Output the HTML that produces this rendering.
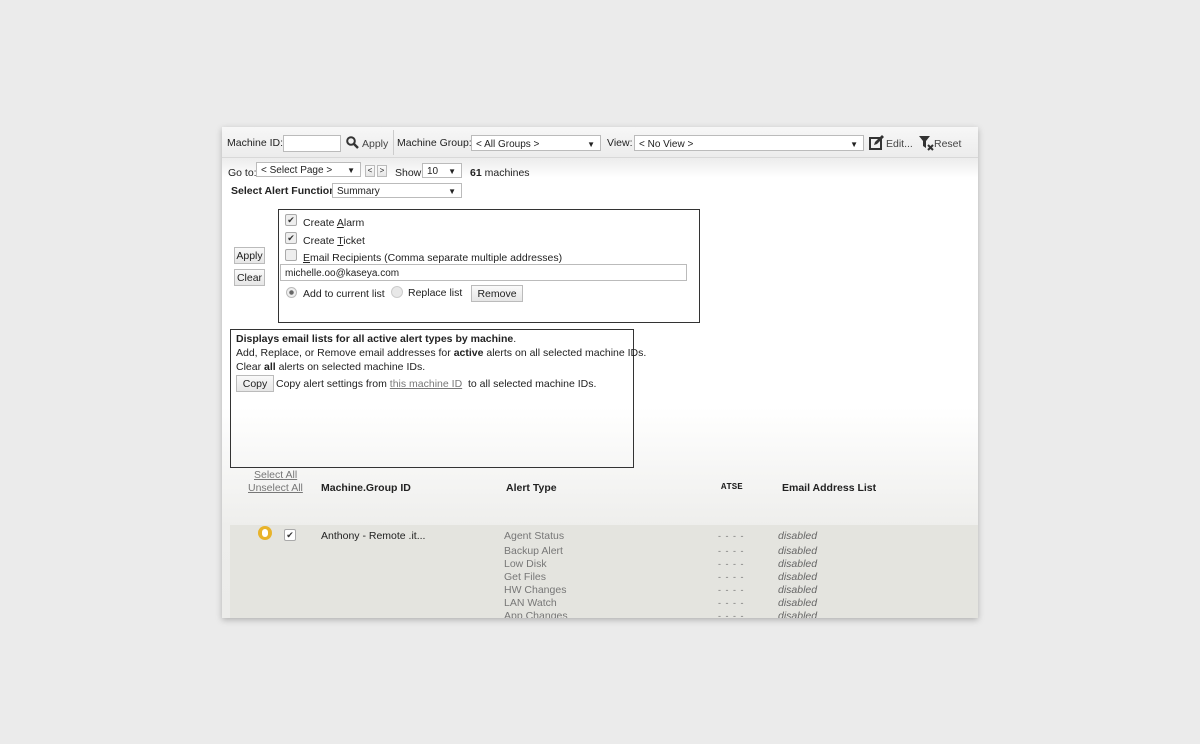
<!DOCTYPE html>
<html><head><style>
body{margin:0;width:1200px;height:744px;background:#ebebeb;font-family:"Liberation Sans",sans-serif;font-size:10.5px;color:#222;position:relative;overflow:hidden}
.a{position:absolute;white-space:nowrap}
#p{position:absolute;left:222px;top:127px;width:756px;height:491px;background:linear-gradient(#fff 0,#fff 280px,#eeeeec 400px,#ececea 491px);box-shadow:0 2px 6px rgba(0,0,0,.25);overflow:hidden}
.sel{position:absolute;background:#fff;border:1px solid #bbb;height:14px;font-size:10px;line-height:15px;padding-left:4px;box-sizing:border-box}
.sel i{position:absolute;right:5px;top:0;font-style:normal;font-size:8px}
.btn{position:absolute;border:1px solid #bbb;background:linear-gradient(#fafafa,#e6e6e6);font-size:10.5px;line-height:16px;text-align:center;box-sizing:border-box;height:17px}
.cb{position:absolute;width:10px;height:10px;border:1px solid #aaa;border-radius:2px;background:#eee;font-size:9px;line-height:10px;text-align:center;color:#333}
.g{color:#777}
.it{color:#666;font-style:italic}
</style></head><body>
<div id="p">
<div class="a" style="left:0;top:0;width:756px;height:30px;background:linear-gradient(#f7f7f7,#ececec);border-bottom:1px solid #d8d8d8"></div>
<div class="a" style="left:0;top:31px;width:756px;height:20px;background:linear-gradient(#ececec,#fff)"></div>
<div class="a" style="left:5px;top:10px">Machine ID:</div>
<div class="sel" style="left:61px;top:8px;width:58px;height:17px"></div>
<svg class="a" style="left:124px;top:9px" width="13" height="13"><circle cx="5" cy="5" r="3.8" fill="none" stroke="#333" stroke-width="2"/><path d="M8 8l4 4" stroke="#333" stroke-width="2.4"/></svg>
<div class="a" style="left:140px;top:11px;color:#444">Apply</div>
<div class="a" style="left:171px;top:3px;width:1px;height:25px;background:#ccc"></div>
<div class="a" style="left:175px;top:10px">Machine Group:</div>
<div class="sel" style="left:249px;top:8px;width:130px;height:16px;line-height:17px">&lt; All Groups &gt;<i>▼</i></div>
<div class="a" style="left:385px;top:10px">View:</div>
<div class="sel" style="left:412px;top:8px;width:230px;height:16px;line-height:17px">&lt; No View &gt;<i>▼</i></div>
<svg class="a" style="left:647px;top:8px" width="16" height="16"><rect x="1" y="3" width="11" height="11" fill="none" stroke="#333" stroke-width="2"/><path d="M5 10l1-3 7-7 2 2-7 7z" fill="#333"/></svg>
<div class="a" style="left:664px;top:11px;color:#444">Edit...</div>
<svg class="a" style="left:696px;top:8px" width="16" height="16"><path d="M1 1h11l-4 5v7l-3-2v-5z" fill="#333"/><path d="M10 10l5 5M15 10l-5 5" stroke="#333" stroke-width="2"/></svg>
<div class="a" style="left:712px;top:11px;color:#444">Reset</div>

<div class="a" style="left:6px;top:40px">Go to:</div>
<div class="sel" style="left:34px;top:35px;width:105px;height:15px">&lt; Select Page &gt;<i>▼</i></div>
<div class="btn" style="left:143px;top:38px;width:10px;height:12px;font-size:8px;line-height:10px">&lt;</div>
<div class="btn" style="left:155px;top:38px;width:10px;height:12px;font-size:8px;line-height:10px">&gt;</div>
<div class="a" style="left:173px;top:40px">Show</div>
<div class="sel" style="left:200px;top:36px;width:40px;height:15px">10<i>▼</i></div>
<div class="a" style="left:248px;top:40px"><b>61</b> machines</div>
<div class="a" style="left:9px;top:58px;font-weight:bold">Select Alert Function</div>
<div class="sel" style="left:110px;top:56px;width:130px;height:15px">Summary<i>▼</i></div>

<div class="a" style="left:56px;top:82px;width:422px;height:114px;border:1px solid #333;box-sizing:border-box;background:#fff"></div>
<div class="cb" style="left:63px;top:87px">✔</div><div class="a" style="left:81px;top:90px">Create <u>A</u>larm</div>
<div class="cb" style="left:63px;top:105px">✔</div><div class="a" style="left:81px;top:108px">Create <u>T</u>icket</div>
<div class="cb" style="left:63px;top:122px"></div><div class="a" style="left:81px;top:125px"><u>E</u>mail Recipients (Comma separate multiple addresses)</div>
<div class="sel" style="left:58px;top:137px;width:407px;height:17px;line-height:17px">michelle.oo@kaseya.com</div>
<div class="a" style="left:64px;top:160px;width:9px;height:9px;border-radius:50%;border:1px solid #bbb;background:radial-gradient(#666 30%,#eee 40%)"></div>
<div class="a" style="left:81px;top:161px">Add to current list</div>
<div class="a" style="left:169px;top:159px;width:10px;height:10px;border-radius:50%;border:1px solid #ccc;background:#e8e8e8"></div>
<div class="a" style="left:186px;top:160px">Replace list</div>
<div class="btn" style="left:249px;top:158px;width:52px">Remove</div>
<div class="btn" style="left:12px;top:120px;width:31px">Apply</div>
<div class="btn" style="left:12px;top:142px;width:31px">Clear</div>

<div class="a" style="left:8px;top:202px;width:404px;height:139px;border:1px solid #333;box-sizing:border-box"></div>
<div class="a" style="left:14px;top:206px"><b>Displays email lists for all active alert types by machine</b>.</div>
<div class="a" style="left:14px;top:220px">Add, Replace, or Remove email addresses for <b>active</b> alerts on all selected machine IDs.</div>
<div class="a" style="left:14px;top:234px">Clear <b>all</b> alerts on selected machine IDs.</div>
<div class="btn" style="left:14px;top:248px;width:38px">Copy</div>
<div class="a" style="left:54px;top:251px">Copy alert settings from <u class="g">this machine ID</u>&nbsp; to all selected machine IDs.</div>

<div class="a g" style="left:32px;top:342px"><u>Select All</u></div>
<div class="a g" style="left:26px;top:355px"><u>Unselect All</u></div>
<div class="a" style="left:99px;top:355px;font-weight:bold">Machine.Group ID</div>
<div class="a" style="left:284px;top:355px;font-weight:bold">Alert Type</div>
<div class="a" style="left:499px;top:355px;font-weight:bold;font-family:'Liberation Mono',monospace;font-size:9px">ATSE</div>
<div class="a" style="left:560px;top:355px;font-weight:bold">Email Address List</div>

<div class="a" style="left:8px;top:398px;width:748px;height:93px;background:#e4e4df"></div>
<div class="a" style="left:36px;top:399px;width:14px;height:14px;border-radius:50%;background:#e8b32a"></div>
<div class="a" style="left:40px;top:402px;width:6px;height:8px;border-radius:3px;background:#fff"></div>
<div class="cb" style="left:62px;top:402px;background:#fff">✔</div>
<div class="a" style="left:99px;top:403px">Anthony - Remote .it...</div>
<div class="a g" style="left:282px;top:403px;line-height:13px">Agent Status<br><span style="display:block;margin-top:2px">Backup Alert<br>Low Disk<br>Get Files<br>HW Changes<br>LAN Watch<br>App Changes</span></div>
<div class="a g" style="left:496px;top:403px;line-height:13px;font-size:9px;letter-spacing:1px">- - - -<br><span style="display:block;margin-top:2px">- - - -<br>- - - -<br>- - - -<br>- - - -<br>- - - -<br>- - - -</span></div>
<div class="a it" style="left:556px;top:403px;line-height:13px">disabled<br><span style="display:block;margin-top:2px">disabled<br>disabled<br>disabled<br>disabled<br>disabled<br>disabled</span></div>
</div>
</body></html>
